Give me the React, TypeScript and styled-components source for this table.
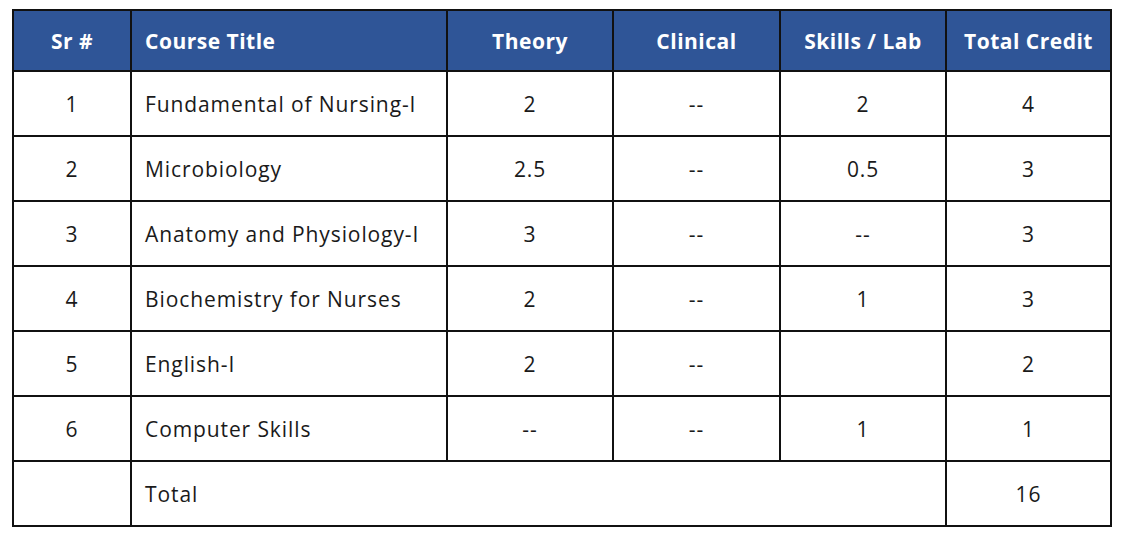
import * as React from "react";
import styled, { createGlobalStyle } from "styled-components";

type CourseRow = {
  sr: string;
  title: string;
  theory: string;
  clinical: string;
  skills: string;
  total: string;
};

const rows: CourseRow[] = [
  { sr: "1", title: "Fundamental of Nursing-I", theory: "2", clinical: "--", skills: "2", total: "4" },
  { sr: "2", title: "Microbiology", theory: "2.5", clinical: "--", skills: "0.5", total: "3" },
  { sr: "3", title: "Anatomy and Physiology-I", theory: "3", clinical: "--", skills: "--", total: "3" },
  { sr: "4", title: "Biochemistry for Nurses", theory: "2", clinical: "--", skills: "1", total: "3" },
  { sr: "5", title: "English-I", theory: "2", clinical: "--", skills: "", total: "2" },
  { sr: "6", title: "Computer Skills", theory: "--", clinical: "--", skills: "1", total: "1" },
];

const columnWidths = [118, 316, 166, 167, 166, 165];

const GlobalStyle = createGlobalStyle`
  body {
    margin: 0;
    background: #ffffff;
    font-family: "Open Sans", "Noto Sans", sans-serif;
  }
`;

const Page = styled.div`
  padding: 9px 0 0 12px;
`;

const Table = styled.table`
  border-collapse: collapse;
  table-layout: fixed;
  width: 1098px;
  border: 2px solid #111;
`;

const HeadCell = styled.th<{ $align?: "left" | "center" }>`
  height: 59px;
  padding: 0 ${(p) => (p.$align === "left" ? "13px" : "0")};
  background: #2f5597;
  color: #ffffff;
  font-size: 21px;
  font-weight: 700;
  letter-spacing: 0.5px;
  text-align: ${(p) => p.$align ?? "center"};
  border: 2px solid #111;
`;

const Cell = styled.td<{ $align?: "left" | "center" }>`
  height: 63px;
  padding: 0 ${(p) => (p.$align === "left" ? "13px" : "0")};
  color: #1a1a1a;
  font-size: 21px;
  letter-spacing: 0.9px;
  text-align: ${(p) => p.$align ?? "center"};
  vertical-align: middle;
  border: 2px solid #111;
`;

export default function App() {
  return (
    <Page>
      <GlobalStyle />
      <Table>
        <colgroup>
          {columnWidths.map((w, i) => (
            <col key={i} style={{ width: w }} />
          ))}
        </colgroup>
        <thead>
          <tr>
            <HeadCell>Sr #</HeadCell>
            <HeadCell $align="left">Course Title</HeadCell>
            <HeadCell>Theory</HeadCell>
            <HeadCell>Clinical</HeadCell>
            <HeadCell>Skills / Lab</HeadCell>
            <HeadCell>Total Credit</HeadCell>
          </tr>
        </thead>
        <tbody>
          {rows.map((r) => (
            <tr key={r.sr}>
              <Cell>{r.sr}</Cell>
              <Cell $align="left">{r.title}</Cell>
              <Cell>{r.theory}</Cell>
              <Cell>{r.clinical}</Cell>
              <Cell>{r.skills}</Cell>
              <Cell>{r.total}</Cell>
            </tr>
          ))}
          <tr>
            <Cell />
            <Cell $align="left" colSpan={4}>
              Total
            </Cell>
            <Cell>16</Cell>
          </tr>
        </tbody>
      </Table>
    </Page>
  );
}
